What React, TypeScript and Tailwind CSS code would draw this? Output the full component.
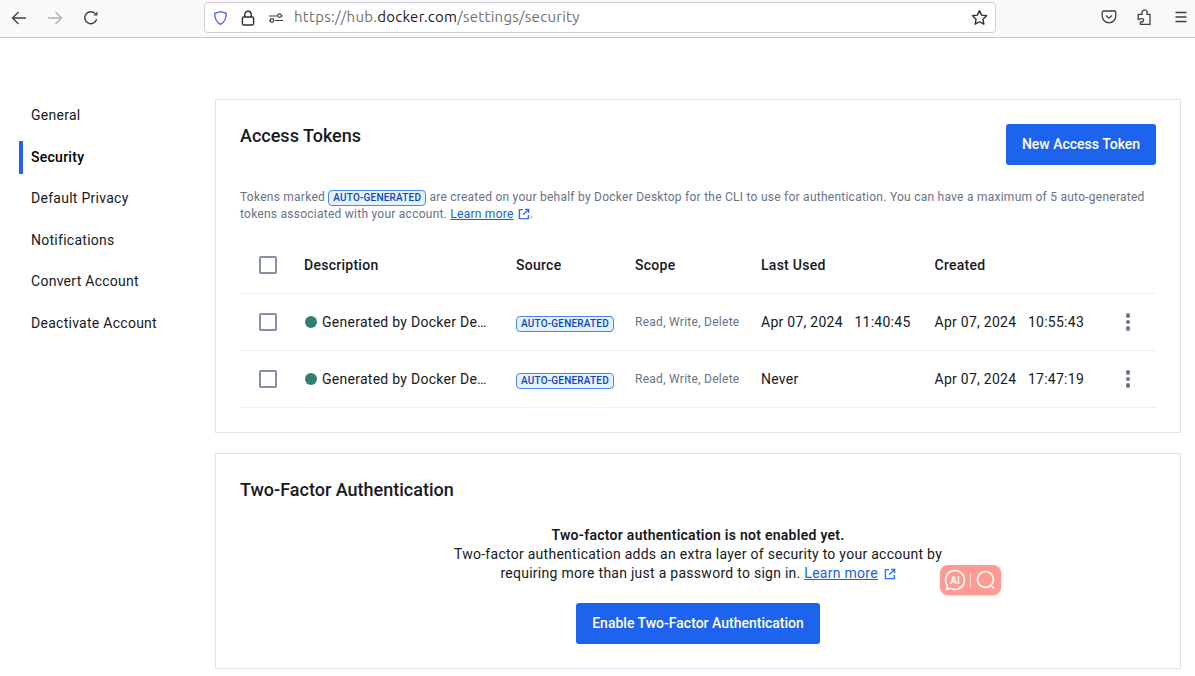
import React from "react";

const font = { fontFamily: "Roboto, sans-serif" };

function ExtLink({ className = "" }: { className?: string }) {
  return (
    <svg viewBox="0 0 12 12" className={className} fill="none" stroke="currentColor" strokeWidth="1.4">
      <path d="M5 1.6H1.4v9h9V7" />
      <path d="M7 1.4h3.6V5M10.4 1.6 5.2 6.8" />
    </svg>
  );
}

function Badge() {
  return (
    <span className="inline-flex items-center h-[16px] px-[4px] rounded-[4px] border border-[#4a86f2] bg-[#e5f2fc] text-[#0c45c2] font-medium text-[10px] tracking-[0.2px] leading-none">
      AUTO-GENERATED
    </span>
  );
}

function Checkbox() {
  return <span className="block w-[18px] h-[18px] rounded-[2px] border-2 border-[#8590a6] bg-white" />;
}

function Kebab() {
  return (
    <span className="flex flex-col gap-[2px] items-center w-[5px]">
      <span className="block w-[4.5px] h-[4.5px] rounded-full bg-[#6c7689]" />
      <span className="block w-[4.5px] h-[4.5px] rounded-full bg-[#6c7689]" />
      <span className="block w-[4.5px] h-[4.5px] rounded-full bg-[#6c7689]" />
    </span>
  );
}

function Row({ last, created }: { last: React.ReactNode; created: React.ReactNode }) {
  return (
    <div className="flex items-center h-[57px] border-b border-[#eef0f3] text-[14px] tracking-[0.27px] text-[#17191e]">
      <div className="w-[64px] pl-[19px]"><Checkbox /></div>
      <div className="w-[212px] flex items-center">
        <span className="w-[12px] h-[12px] rounded-full bg-[#2f8073] ml-[1px] mr-[5px]" />
        <span>Generated by Docker De…</span>
      </div>
      <div className="w-[119px]"><Badge /></div>
      <div className="w-[126px] text-[12px] text-[#677285]">Read, Write, Delete</div>
      <div className="w-[173.5px]">{last}</div>
      <div className="w-[191px]">{created}</div>
      <Kebab />
    </div>
  );
}

function Stamp({ d, t }: { d: string; t: string }) {
  return (
    <span className="flex gap-[11.5px]">
      <span>{d}</span>
      <span>{t}</span>
    </span>
  );
}

const nav = ["General", "Security", "Default Privacy", "Notifications", "Convert Account", "Deactivate Account"];

export default function App() {
  return (
    <div className="w-[1195px] h-[676px] relative overflow-hidden bg-white" style={font}>
      {/* browser toolbar */}
      <div className="h-[38px] bg-[#f9f9fb] border-b border-[#c8c8cb] flex items-start">
        <div className="flex items-center pl-[11px] pt-[10px] gap-[20px] w-[204px]">
          <svg viewBox="0 0 16 16" className="w-[16px] h-[16px]" fill="none" stroke="#3f3f44" strokeWidth="1.3"><path d="M15 8H1.5M7.5 2 1.5 8l6 6" /></svg>
          <svg viewBox="0 0 16 16" className="w-[16px] h-[16px]" fill="none" stroke="#b1b1b3" strokeWidth="1.3"><path d="M1 8h13.5M8.5 2l6 6-6 6" /></svg>
          <svg viewBox="0 0 16 16" className="w-[16px] h-[16px]" fill="none" stroke="#3f3f44" strokeWidth="1.4"><path d="M13.6 9.2A6 6 0 1 1 12 3.4" /><path d="M14.4 1.6v4h-4z" fill="#3f3f44" stroke="none" /></svg>
        </div>
        <div className="w-[792px] h-[31px] mt-[2px] bg-white border border-[#cfcfd4] rounded-[4px] flex items-center pl-[8px] pr-[7px]">
          <svg viewBox="0 0 16 16" className="w-[15px] h-[16px]" fill="none" stroke="#5560e0" strokeWidth="1.4"><path d="M8 1.2 14.2 3c0 5-.8 9-6.2 11.8C2.6 12 1.8 8 1.8 3z" /></svg>
          <svg viewBox="0 0 16 16" className="w-[16px] h-[16px] ml-[12px]" fill="none" stroke="#2f2f33" strokeWidth="1.4"><rect x="2.4" y="7" width="11.2" height="8" rx="1.6" /><path d="M4.8 7V4.4a3.2 3.2 0 0 1 6.4 0V7" /></svg>
          <svg viewBox="0 0 16 16" className="w-[16px] h-[16px] ml-[12px]" fill="none" stroke="#3f3f44" strokeWidth="1.2"><path d="M1 6h8M13.5 6H15M7 10.5h8M1 10.5h1" /><circle cx="11.5" cy="5.6" r="1.8" /><circle cx="4" cy="10.5" r="1.8" /></svg>
          <span className="ml-[10px] text-[15px] tracking-[0.27px] text-[#6f6f74]" style={{ fontFamily: "Ubuntu, 'Noto Sans', sans-serif" }}>
            https://hub.<span className="text-[#17171a]">docker.com</span>/settings/security
          </span>
          <svg viewBox="0 0 16 16" className="w-[17px] h-[17px] ml-auto" fill="none" stroke="#2f2f33" strokeWidth="1.3" strokeLinejoin="round"><path d="m8 1.5 2 4.3 4.7.6-3.5 3.2.9 4.7L8 12l-4.1 2.3.9-4.7L1.3 6.4 6 5.8z" /></svg>
        </div>
        <div className="flex items-center ml-[105px] pt-[9px] gap-[20px]">
          <svg viewBox="0 0 16 16" className="w-[16px] h-[16px]" fill="none" stroke="#3f3f44" strokeWidth="1.3"><path d="M2.6 2h10.8c.8 0 1.4.6 1.4 1.4V7A6.8 6.8 0 0 1 1.2 7V3.4C1.2 2.6 1.8 2 2.6 2z" /><path d="m5 6.4 3 2.8 3-2.8" /></svg>
          <svg viewBox="0 0 16 16" className="w-[16px] h-[16px]" fill="none" stroke="#3f3f44" strokeWidth="1.3" strokeLinejoin="round"><path d="M1.2 5.3h4C4.4 2.8 5.8.9 7.6.9s3.2 1.9 2.4 4.4h3v10.2H3.4v-2.6c2 .4 3.2-.6 3.2-1.9S5 8.9 1.2 10.6z" /></svg>
          <svg viewBox="0 0 16 16" className="w-[16px] h-[16px]" fill="none" stroke="#3f3f44" strokeWidth="1.3"><path d="M2.5 3.5h11M2.5 8h11M2.5 12.5h11" /></svg>
        </div>
      </div>

      <div className="flex pl-[19px] pt-[61px]">
        {/* sidebar */}
        <nav className="w-[196px] flex flex-col text-[14px] tracking-[0.27px] text-[#17191e] -mt-[4px]">
          {nav.map((n) => (
            <div key={n} className="h-[41.5px] flex items-center">
              <span className={`w-[4px] h-[33px] ${n === "Security" ? "bg-[#2560ff]" : ""}`} />
              <span className={`ml-[8px] ${n === "Security" ? "font-medium text-black" : ""}`}>{n}</span>
            </div>
          ))}
        </nav>

        {/* main */}
        <main className="w-[966px] flex flex-col gap-[20px]">
          <section className="h-[334px] border border-[#dfe2e7] px-[24px] pt-[24px]">
            <div className="flex justify-between">
              <h2 className="text-[18px] leading-[24px] font-medium text-[#17191e]">Access Tokens</h2>
              <button className="w-[150px] h-[41px] rounded-[3px] bg-[#1d63ed] text-white text-[14px] font-medium">New Access Token</button>
            </div>
            <p className="mt-[24px] text-[12px] leading-[17px] tracking-[0.25px] text-[#677285]">
              Tokens marked <Badge /> are created on your behalf by Docker Desktop for the CLI to use for authentication. You can have a maximum of 5 auto-generated tokens associated with your account.{" "}
              <span className="text-[#0c5fe0] underline">Learn more</span>{" "}
              <ExtLink className="inline w-[12px] h-[12px] text-[#2f6ef0] ml-[1px] -mt-[1px]" />.
            </p>
            <div className="mt-[14px]">
              <div className="flex items-center h-[57px] border-b border-[#eef0f3] text-[14px] tracking-[0.27px] font-medium text-[#17191e]">
                <div className="w-[64px] pl-[19px]"><Checkbox /></div>
                <div className="w-[212px]">Description</div>
                <div className="w-[119px]">Source</div>
                <div className="w-[126px]">Scope</div>
                <div className="w-[173.5px]">Last Used</div>
                <div>Created</div>
              </div>
              <Row last={<Stamp d="Apr 07, 2024" t="11:40:45" />} created={<Stamp d="Apr 07, 2024" t="10:55:43" />} />
              <Row last="Never" created={<Stamp d="Apr 07, 2024" t="17:47:19" />} />
            </div>
          </section>

          <section className="h-[216px] border border-[#dfe2e7] px-[24px] pt-[24px]">
            <h2 className="text-[18px] leading-[24px] font-medium text-[#17191e]">Two-Factor Authentication</h2>
            <div className="mt-[24px] flex flex-col items-center text-[14px] leading-[19px] tracking-[0.27px] text-[#17191e] text-center">
              <p className="font-semibold">Two-factor authentication is not enabled yet.</p>
              <p className="w-[520px]">
                Two-factor authentication adds an extra layer of security to your account by requiring more than just a password to sign in.{" "}
                <span className="text-[#2060e0] underline">Learn more</span>{" "}
                <ExtLink className="inline w-[12px] h-[12px] text-[#2f6ef0] ml-[2px] -mt-[1px]" />
              </p>
              <button className="mt-[20px] w-[244px] h-[41px] rounded-[3px] bg-[#1d63ed] text-white text-[14px] tracking-normal font-medium">Enable Two-Factor Authentication</button>
            </div>
          </section>
        </main>
      </div>

      {/* floating AI widget */}
      <div className="absolute left-[940px] top-[565px] w-[61px] h-[30px] rounded-[8px] bg-[#ff9a93] flex items-center justify-center shadow-sm">
        <svg viewBox="0 0 61 30" className="w-[61px] h-[30px]" fill="none" stroke="#fff" strokeWidth="1.6">
          <path d="M15 5.5a9.5 9.5 0 1 1-4.5 17.9l-4 1 1-3.6A9.5 9.5 0 0 1 15 5.5z" />
          <text x="15" y="19" textAnchor="middle" fill="#fff" stroke="none" fontSize="10" fontWeight="700" fontFamily="Roboto, sans-serif">AI</text>
          <path d="M30.5 7.5v15" strokeWidth="1" opacity=".7" />
          <circle cx="45.5" cy="14.5" r="8" />
          <path d="m51 20.5 3 3" />
        </svg>
      </div>
    </div>
  );
}
